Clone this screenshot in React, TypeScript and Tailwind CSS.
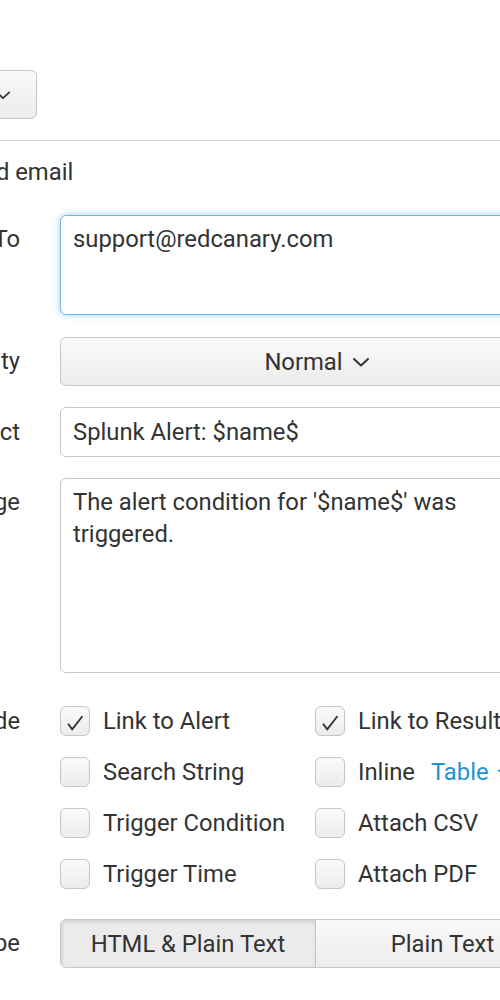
import type { ReactNode } from "react"

function Chevron({ className = "", color = "#333333" }: { className?: string; color?: string }) {
  return (
    <svg className={className} viewBox="0 0 18 10" fill="none">
      <path d="M2 2 L9 8.5 L16 2" stroke={color} strokeWidth="2" strokeLinecap="round" strokeLinejoin="round" />
    </svg>
  )
}

function Row({
  label,
  labelClass = "",
  className = "",
  children,
}: {
  label: string
  labelClass?: string
  className?: string
  children: ReactNode
}) {
  return (
    <div className={`flex ${className}`}>
      <div className={`w-[160px] shrink-0 text-right whitespace-nowrap ${labelClass}`}>{label}</div>
      <div className="ml-[40px] w-[510px] shrink-0">{children}</div>
    </div>
  )
}

function Checkbox({ label, checked = false, extra }: { label: string; checked?: boolean; extra?: ReactNode }) {
  return (
    <div className="flex items-center h-[30px]">
      <div className="w-[30px] h-[30px] shrink-0 rounded-[6px] border border-[#c6c6c6] bg-gradient-to-b from-[#fafafa] to-[#ececec] flex items-center justify-center">
        {checked && (
          <svg width="30" height="30" viewBox="0 0 30 30" fill="none">
            <path d="M8 18.5 L12 24 L22.5 10.5" stroke="#333333" strokeWidth="2" strokeLinecap="round" strokeLinejoin="round" />
          </svg>
        )}
      </div>
      <span className="ml-[13px] leading-[28px] whitespace-nowrap">{label}</span>
      {extra}
    </div>
  )
}

export default function App() {
  return (
    <div className="w-[500px] h-[1000px] overflow-hidden bg-white relative font-['Roboto',sans-serif] text-[23.8px] text-[#333333]">
      <div className="ml-[-140px] w-[800px]">
        {/* Add actions button */}
        <div className="pt-[70px] flex justify-end w-[177px]">
          <button className="h-[49px] flex items-center pl-[18px] pr-[25px] rounded-[6px] border border-[#c6c6c6] bg-gradient-to-b from-[#fafafa] to-[#ececec] whitespace-nowrap">
            <span className="leading-[28px]">Add Actions</span>
            <Chevron className="ml-[8px] w-[16px] h-[10px]" />
          </button>
        </div>

        <div className="mt-[21px] h-px bg-[#d8d8d8] w-full" />

        <div className="mt-[17px] pl-[96px] leading-[28px]">Send email</div>

        {/* To */}
        <Row label="To" labelClass="pt-[8px] leading-[32px]" className="mt-[29px]">
          <div className="h-[100px] rounded-[6px] border border-[#6db9ea] shadow-[0_0_7px_rgba(82,168,236,0.55)] bg-white pt-[7px] pl-[12px] leading-[32px]">
            support@redcanary.com
          </div>
        </Row>

        {/* Priority */}
        <Row label="Priority" labelClass="leading-[49px]" className="mt-[22px]">
          <button className="w-[514px] h-[49px] rounded-[6px] border border-[#c6c6c6] bg-gradient-to-b from-[#fafafa] to-[#ececec] flex items-center justify-center">
            <span className="leading-[28px]">Normal</span>
            <Chevron className="ml-[9px] w-[18px] h-[10px]" />
          </button>
        </Row>

        {/* Subject */}
        <Row label="Subject" labelClass="leading-[50px]" className="mt-[21px]">
          <div className="h-[50px] rounded-[6px] border border-[#c6c6c6] bg-white pl-[12px] flex items-center">
            <span className="leading-[28px]">Splunk Alert: $name$</span>
          </div>
        </Row>

        {/* Message */}
        <Row label="Message" labelClass="pt-[8px] leading-[32px]" className="mt-[21px]">
          <div className="h-[195px] rounded-[6px] border border-[#c6c6c6] bg-white pt-[7px] pl-[12px] pr-[20px] leading-[32px]">
            The alert condition for '$name$' was triggered.
          </div>
        </Row>

        {/* Include */}
        <Row label="Include" labelClass="leading-[30px]" className="mt-[33px]">
          <div className="grid grid-cols-[255px_255px] gap-y-[21px]">
            <Checkbox label="Link to Alert" checked />
            <Checkbox label="Link to Results" checked />
            <Checkbox label="Search String" />
            <Checkbox
              label="Inline"
              extra={
                <span className="ml-[16px] flex items-center text-[#1e93d2] leading-[28px]">
                  Table
                  <Chevron className="ml-[8px] w-[14px] h-[9px]" color="#1e93d2" />
                </span>
              }
            />
            <Checkbox label="Trigger Condition" />
            <Checkbox label="Attach CSV" />
            <Checkbox label="Trigger Time" />
            <Checkbox label="Attach PDF" />
          </div>
        </Row>

        {/* Type */}
        <Row label="Type" labelClass="leading-[49px]" className="mt-[30px]">
          <div className="h-[49px] flex rounded-[6px] border border-[#c6c6c6] overflow-hidden">
            <button className="w-[255px] h-full flex items-center justify-center bg-[#ebebeb] shadow-[inset_1px_2px_4px_rgba(0,0,0,0.12)] border-r border-[#c6c6c6]">
              <span className="leading-[28px]">HTML &amp; Plain Text</span>
            </button>
            <button className="flex-1 h-full flex items-center justify-center bg-gradient-to-b from-[#fafafa] to-[#ececec]">
              <span className="leading-[28px]">Plain Text</span>
            </button>
          </div>
        </Row>
      </div>
    </div>
  )
}
